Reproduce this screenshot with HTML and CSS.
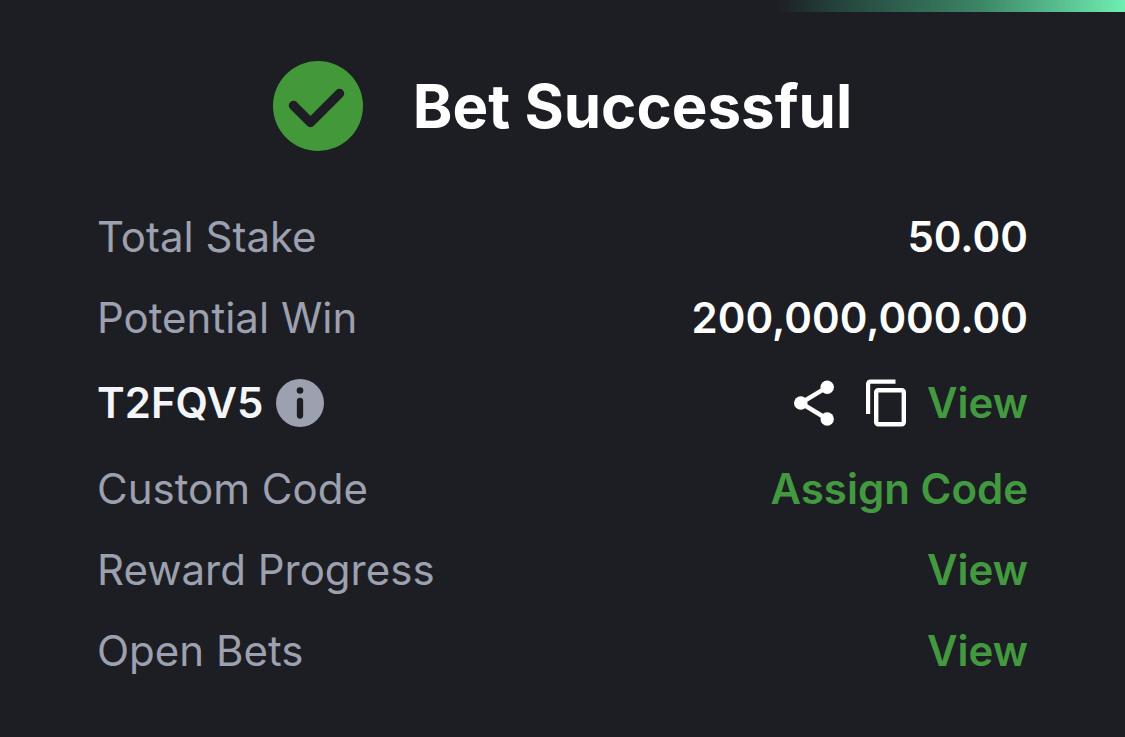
FILE: index.html
```html
<!DOCTYPE html>
<html lang="en">
<head>
<meta charset="utf-8">
<meta name="viewport" content="width=device-width, initial-scale=1">
<title>Bet Successful</title>
<link rel="stylesheet" href="styles.css">
</head>
<body>
<div class="progress" aria-hidden="true"></div>
<main class="panel">
  <header class="heading">
    <svg class="check" viewBox="0 0 90 90" aria-hidden="true">
      <circle cx="45" cy="45" r="45" fill="#43993a"/>
      <path d="M20.5 44.5 L37.5 61.5 L66.5 32.5" fill="none" stroke="#1d1e23" stroke-width="9.5" stroke-linecap="round" stroke-linejoin="round"/>
    </svg>
    <h1 class="title">Bet Successful</h1>
  </header>
  <dl class="details">
    <div class="row"><dt class="label">Total Stake</dt><dd class="value">50.00</dd></div>
    <div class="row"><dt class="label">Potential Win</dt><dd class="value">200,000,000.00</dd></div>
    <div class="row row-code">
      <dt class="code">T2FQV5
        <button class="icon-button" type="button" aria-label="Booking code information">
          <svg class="info" viewBox="0 0 48 48"><circle cx="24" cy="24" r="24" fill="#9ca0af"/><circle cx="24" cy="11.5" r="3.3" fill="#1d1e23"/><path d="M24 22V36.5" stroke="#1d1e23" stroke-width="6.3" stroke-linecap="round"/></svg>
        </button>
      </dt>
      <dd class="value actions">
        <span class="tools">
          <button class="icon-button" type="button" aria-label="Share">
            <svg class="tool" viewBox="0 0 40 48"><path d="M33.2 8.2 L6.8 24 L33.2 40" fill="none" stroke="#fff" stroke-width="4.4"/><g fill="#fff"><circle cx="33.2" cy="8.2" r="6.7"/><circle cx="6.8" cy="24" r="6.8"/><circle cx="33.2" cy="40" r="6.7"/></g></svg>
          </button>
          <button class="icon-button" type="button" aria-label="Copy">
            <svg class="tool" viewBox="0 0 40 48"><path d="M2.1 35V5Q2.1 2.7 4.4 2.7H29.5" fill="none" stroke="#fff" stroke-width="4.2"/><rect x="10.2" y="11.2" width="27.6" height="34" rx="2" fill="none" stroke="#fff" stroke-width="4.4"/></svg>
          </button>
        </span>
        <a class="link" href="#code">View</a>
      </dd>
    </div>
    <div class="row"><dt class="label">Custom Code</dt><dd class="value"><a class="link" href="#assign">Assign Code</a></dd></div>
    <div class="row"><dt class="label">Reward Progress</dt><dd class="value"><a class="link" href="#rewards">View</a></dd></div>
    <div class="row"><dt class="label">Open Bets</dt><dd class="value"><a class="link" href="#bets">View</a></dd></div>
  </dl>
</main>
</body>
</html>
```
FILE: styles.css
```css
body {
  margin: 0;
  background: #1d1e23;
  color: #fff;
  font-family: Inter, "Liberation Sans", sans-serif;
}
.progress {
  height: 12px;
  background: linear-gradient(to right, #1d1e23 69%, #23403a 74%, #3c8565 87%, #6feeb1 100%);
}
.panel {
  padding: 49px 97px 44px;
}
.heading {
  display: flex;
  align-items: center;
  justify-content: center;
  gap: 50px;
}
.check {
  width: 90px;
  height: 90px;
}
.title {
  margin: 0;
  font-size: 60px;
  line-height: 72px;
  font-weight: 700;
}
.details {
  margin: 45px 0 0;
}
.row {
  display: flex;
  align-items: center;
  justify-content: space-between;
  min-height: 81px;
  font-size: 42px;
  line-height: 52px;
}
.row-code {
  min-height: 90px;
}
.label {
  color: #9ca0af;
}
.value {
  margin: 0;
  font-weight: 600;
}
.code,
.actions,
.tools {
  display: flex;
  align-items: center;
}
.code {
  gap: 13px;
  color: #f3f5f9;
  font-weight: 600;
}
.icon-button {
  display: flex;
  padding: 0;
  border: 0;
  background: none;
  cursor: pointer;
}
.info {
  width: 48px;
  height: 48px;
}
.tool {
  width: 40px;
  height: 48px;
}
.tools {
  gap: 32px;
}
.actions {
  gap: 21px;
}
.link {
  color: #43993f;
  text-decoration: none;
}
```
